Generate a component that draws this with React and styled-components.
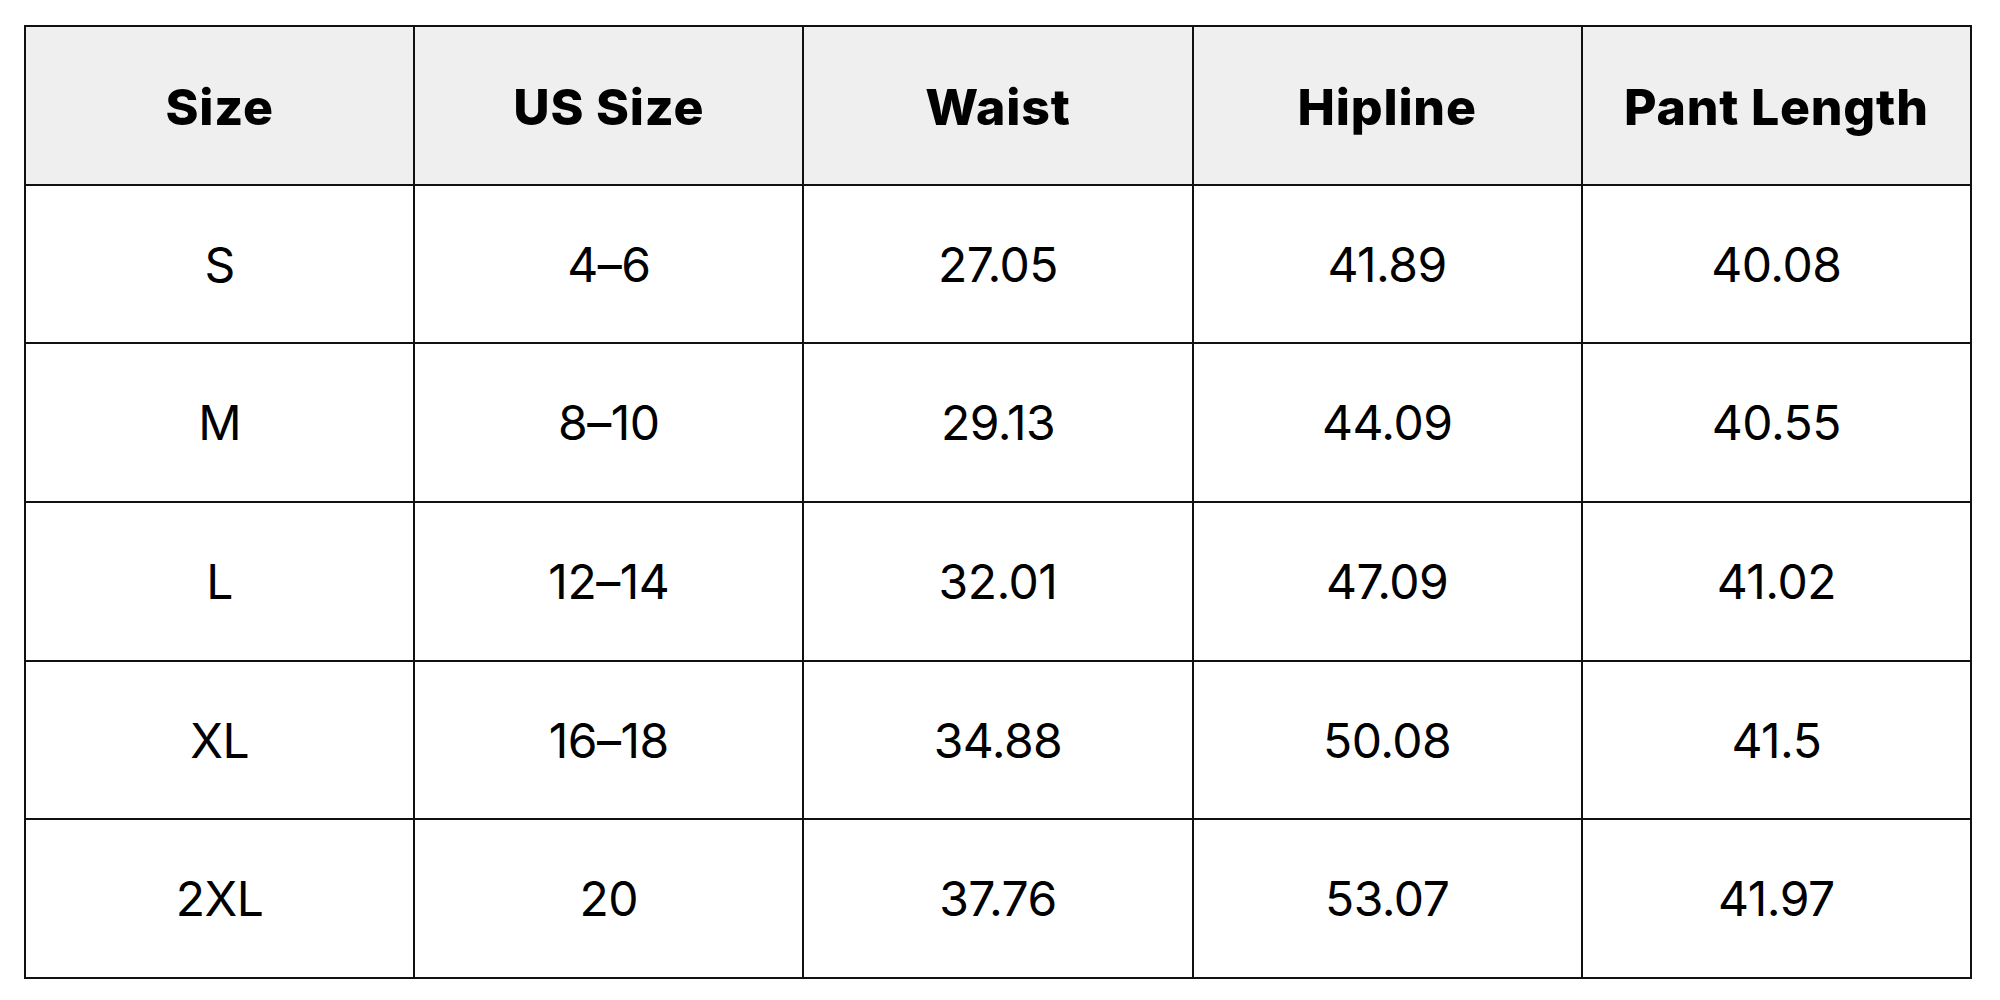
import React from 'react';
import styled, { createGlobalStyle } from 'styled-components';

const GlobalStyle = createGlobalStyle`
  html, body {
    margin: 0;
    padding: 0;
    background: #fff;
  }
  body {
    font-family: Inter, "Open Sans", sans-serif;
    color: #000;
  }
`

const Page = styled.div`
  padding: 25px 28px 23px 24px;
`

const Table = styled.table`
  width: 1948px;
  border-collapse: collapse;
  table-layout: fixed;
  border: 2px solid #111;
`

const Row = styled.tr`
  height: 158.7px;
`

const HeadCell = styled.th`
  background: #efefef;
  border: 2px solid #111;
  font-weight: 800;
  font-size: 50px;
  letter-spacing: 0.8px;
  text-align: center;
  vertical-align: middle;
  padding: 4px 0 0;
`

const Cell = styled.td`
  border: 2px solid #111;
  font-weight: 400;
  font-size: 48px;
  letter-spacing: -0.5px;
  text-align: center;
  vertical-align: middle;
  padding: 0;
`

const columns = ['Size', 'US Size', 'Waist', 'Hipline', 'Pant Length']

const rows = [
  ['S', '4–6', '27.05', '41.89', '40.08'],
  ['M', '8–10', '29.13', '44.09', '40.55'],
  ['L', '12–14', '32.01', '47.09', '41.02'],
  ['XL', '16–18', '34.88', '50.08', '41.5'],
  ['2XL', '20', '37.76', '53.07', '41.97'],
]

const App = () => {
  return (
    <Page>
      <GlobalStyle />
      <Table>
        <thead>
          <Row>
            {columns.map(c => <HeadCell key={c}>{c}</HeadCell>)}
          </Row>
        </thead>
        <tbody>
          {rows.map(r => (
            <Row key={r[0]}>
              {r.map((v, i) => <Cell key={i}>{v}</Cell>)}
            </Row>
          ))}
        </tbody>
      </Table>
    </Page>
  );
};

export default App;
